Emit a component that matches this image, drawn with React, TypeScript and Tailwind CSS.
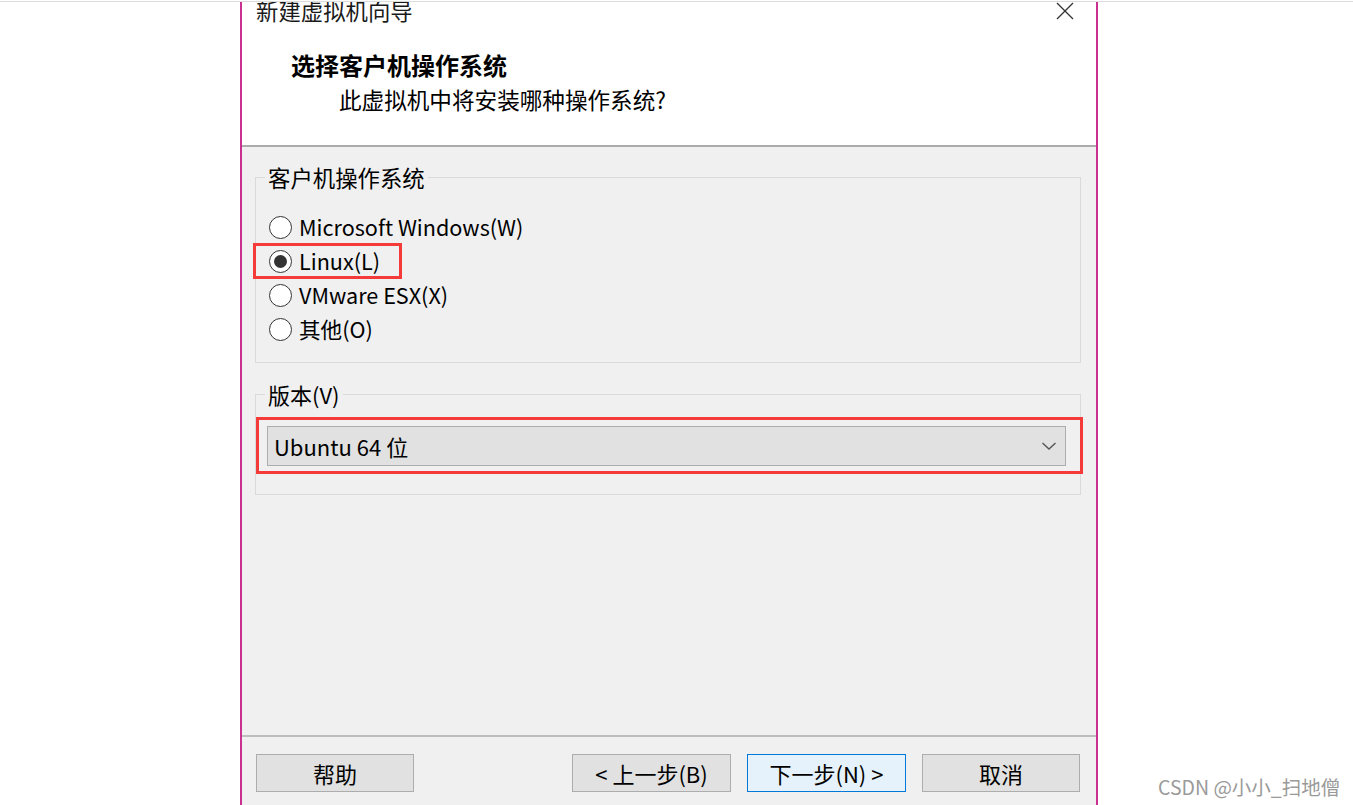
import React from 'react';

const osOptions = [
  { label: 'Microsoft Windows(W)', checked: false },
  { label: 'Linux(L)', checked: true, highlight: true },
  { label: 'VMware ESX(X)', checked: false },
  { label: '其他(O)', checked: false },
];

const Radio: React.FC<{ checked: boolean }> = ({ checked }) => (
  <span className="flex h-[23px] w-[23px] shrink-0 items-center justify-center rounded-full border-[1.5px] border-[#333333] bg-white">
    {checked && <span className="h-[13px] w-[13px] rounded-full bg-[#333333]" />}
  </span>
);

const WizardButton: React.FC<{ label: string; primary?: boolean; className?: string }> = ({ label, primary, className }) => (
  <button
    className={
      'flex h-[38px] items-center justify-center border text-[22px] leading-[24px] text-black ' +
      (primary ? 'border-[#0078d7] bg-[#e5f1fb] ' : 'border-[#adadad] bg-[#e1e1e1] ') +
      (className ?? '')
    }
  >
    {label}
  </button>
);

const App: React.FC = () => {
  return (
    <div className="relative h-[805px] w-[1353px] overflow-hidden bg-white font-['Noto_Sans_CJK_SC',sans-serif] text-black">
      <div className="h-[2px] border-b border-[#dcdcdc]" />

      <div className="ml-[240px] flex h-[803px] w-[858px] flex-col overflow-hidden border-x-2 border-[#c9308f]">
        {/* header */}
        <div className="h-[143px] shrink-0 bg-white">
          <div className="mt-[-3px] flex h-[22px] items-center justify-between pl-[14px] pr-[22px]">
            <span className="text-[22.4px] leading-[22px] text-[#1a1a1a]">新建虚拟机向导</span>
            <svg width="18" height="18" viewBox="0 0 18 18" className="mt-[2px]">
              <path d="M1 1 L17 17 M17 1 L1 17" stroke="#333" strokeWidth="1.3" fill="none" />
            </svg>
          </div>
          <div className="mt-[31px] pl-[49px] text-[24px] font-bold leading-[26px]">选择客户机操作系统</div>
          <div className="mt-[9px] pl-[97px] text-[22.6px] leading-[26px]">此虚拟机中将安装哪种操作系统?</div>
        </div>
        <div className="h-[2px] shrink-0 bg-[#ababab]" />

        {/* body */}
        <div className="flex flex-1 flex-col bg-[#f0f0f0]">
          <div className="flex flex-col pl-[13px] pr-[15px] pt-[19px]">
            <fieldset className="border border-[#dadada]">
              <legend className="ml-[9px] px-[3px] text-[22.4px] leading-[22px]">客户机操作系统</legend>
              <div className="flex flex-col pb-[16px] pl-[13px] pt-[22px]">
                {osOptions.map((o) => (
                  <div key={o.label} className="relative flex h-[34px] items-center gap-[7px]">
                    <Radio checked={o.checked} />
                    <span className="text-[21.6px] leading-[24px]">{o.label}</span>
                    {o.highlight && (
                      <span className="absolute left-[-16px] top-[-1px] h-[36px] w-[149px] border-[3px] border-[#f53a3a]" />
                    )}
                  </div>
                ))}
              </div>
            </fieldset>

            <fieldset className="mt-[20px] border border-[#dadada]">
              <legend className="ml-[9px] px-[3px] text-[22px] leading-[22px]">版本(V)</legend>
              <div className="pb-[28px] pl-[11px] pr-[14px] pt-[21px]">
                <div className="relative flex h-[40px] items-center justify-between border border-[#adadad] bg-[#e1e1e1] pl-[6px] pr-[8px]">
                  <span className="text-[22px] leading-[24px]">Ubuntu 64 位</span>
                  <svg width="16" height="10" viewBox="0 0 16 10">
                    <path d="M1.5 2 L8 8 L14.5 2" stroke="#555" strokeWidth="1.4" fill="none" />
                  </svg>
                  <span className="absolute left-[-12px] top-[-10px] h-[57px] w-[827px] border-[3px] border-[#f53a3a]" />
                </div>
              </div>
            </fieldset>
          </div>

          <div className="flex-1" />
          <div className="h-[2px] bg-[#bdbdbd]" />

          <div className="flex items-center pb-[13px] pl-[14px] pr-[16px] pt-[17px]">
            <WizardButton label="帮助" className="w-[158px]" />
            <div className="flex-1" />
            <div className="flex gap-[16px]">
              <WizardButton label="< 上一步(B)" className="w-[159px]" />
              <WizardButton label="下一步(N) >" primary className="w-[159px]" />
              <WizardButton label="取消" className="w-[158px]" />
            </div>
          </div>
        </div>
      </div>

      <span className="absolute bottom-[8px] left-[1158px] text-[19.5px] leading-[20px] text-[#9a9a9a]">
        CSDN @小小_扫地僧
      </span>
    </div>
  );
};

export default App;
